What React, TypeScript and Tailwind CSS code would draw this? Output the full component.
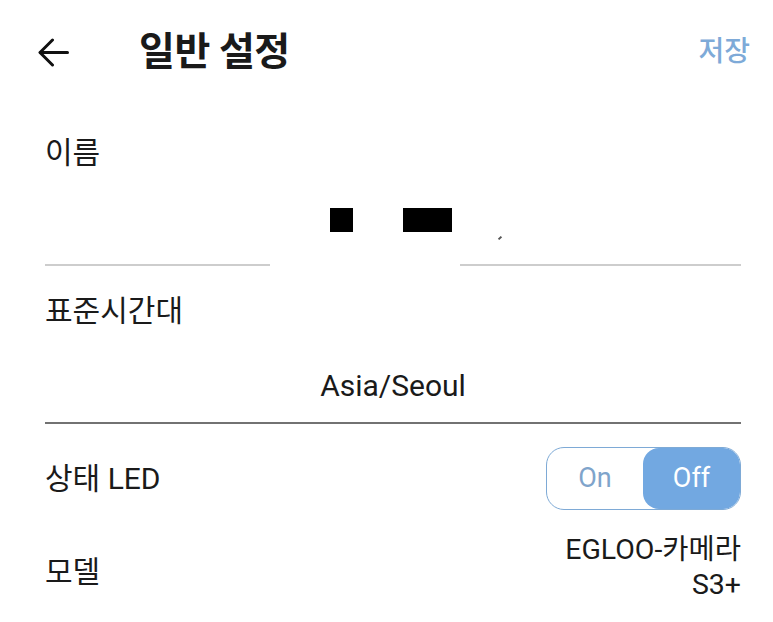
import React from "react";

export default function App() {
  return (
    <div className="w-[773px] h-[622px] bg-white text-[#1a1a1a] font-['Roboto','Noto_Sans_CJK_KR',sans-serif] overflow-hidden">
      {/* Header */}
      <div className="h-[104px] flex items-center pl-[38px] pr-[23px]">
        <svg width="31" height="29" viewBox="0 0 31 29" fill="none" stroke="#111" strokeWidth="3" strokeLinecap="round" strokeLinejoin="round">
          <path d="M29.5 14.5H2.5" />
          <path d="M14.5 2L2 14.5L14.5 27" />
        </svg>
        <div className="ml-[70px] text-[39px] font-bold leading-none tracking-[-0.5px]">일반 설정</div>
        <div className="ml-auto text-[28px] font-medium text-[#7eaad8] leading-none">저장</div>
      </div>

      <div className="pl-[45px] pr-[32px]">
        {/* Name */}
        <div className="h-[96px] flex items-center text-[30px]">이름</div>
        <div className="h-[64px] flex justify-center pt-[8px] pr-[4px] relative">
          <div className="w-[23px] h-[24px] bg-black" />
          <div className="w-[50px]" />
          <div className="w-[49px] h-[24px] bg-black" />
          <div className="absolute left-[453px] top-[37px] w-[4px] h-[2px] bg-[#555] rotate-[-45deg]" />
        </div>
        <div className="flex h-[2px]">
          <div className="w-[225px] bg-[#cdcdcd]" />
          <div className="w-[190px]" />
          <div className="flex-1 bg-[#cdcdcd]" />
        </div>

        {/* Timezone */}
        <div className="h-[88px] flex items-center text-[30px]">표준시간대</div>
        <div className="h-[68px] pb-[6px] flex items-center justify-center text-[30px]">Asia/Seoul</div>
        <div className="h-[2px] bg-[#727272]" />

        {/* LED */}
        <div className="h-[108px] flex items-center justify-between">
          <div className="text-[30px]">상태 LED</div>
          <div className="w-[195px] h-[63px] rounded-[18px] border-[1.5px] border-[#7eaad6] flex overflow-hidden">
            <div className="flex-1 flex items-center justify-center text-[27px] text-[#7fa4cb]">On</div>
            <div className="w-[97px] bg-[#72a8e1] rounded-[16px] flex items-center justify-center text-[27px] text-white">Off</div>
          </div>
        </div>

        {/* Model */}
        <div className="h-[78px] flex items-center justify-between">
          <div className="text-[30px]">모델</div>
          <div className="text-[28.5px] leading-[35px] text-right -mt-[8px]">
            <div>EGLOO-카메라</div>
            <div>S3+</div>
          </div>
        </div>
      </div>
    </div>
  );
}
